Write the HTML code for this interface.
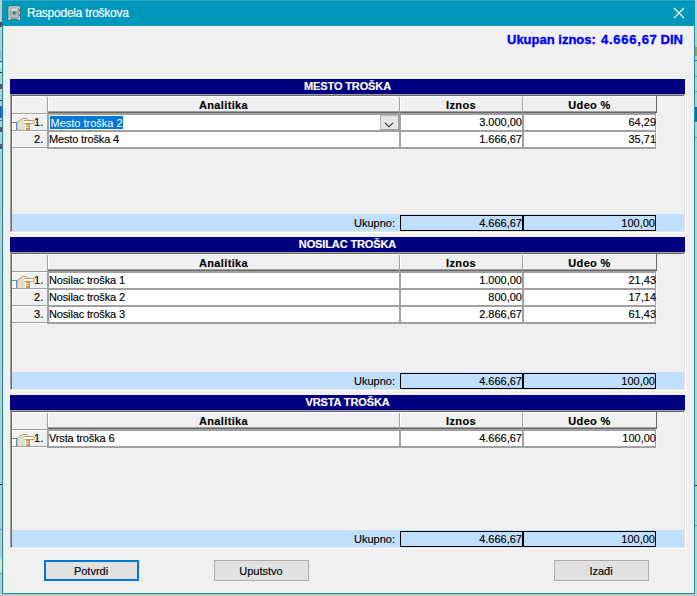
<!DOCTYPE html>
<html><head><meta charset="utf-8"><style>
html,body{margin:0;padding:0;}
body{width:697px;height:596px;position:relative;overflow:hidden;background:#C9C6C6;font-family:"Liberation Sans", sans-serif;}
.t{-webkit-text-stroke:0.15px currentColor;}
</style></head><body>
<div style="position:absolute;left:0px;top:22px;width:2px;height:5px;background:#6A4050"></div><div style="position:absolute;left:0px;top:50px;width:2px;height:9px;background:#B8B8B8"></div><div style="position:absolute;left:0px;top:61px;width:2px;height:1px;background:#505050"></div><div style="position:absolute;left:0px;top:63px;width:2px;height:5px;background:#CFE6E6"></div><div style="position:absolute;left:0px;top:72px;width:2px;height:1px;background:#303030"></div><div style="position:absolute;left:0px;top:84px;width:2px;height:5px;background:#7A4A5A"></div><div style="position:absolute;left:0px;top:100px;width:2px;height:1px;background:#404040"></div><div style="position:absolute;left:0px;top:106px;width:2px;height:12px;background:#2A64C0"></div><div style="position:absolute;left:0px;top:120px;width:2px;height:1px;background:#505050"></div><div style="position:absolute;left:0px;top:127px;width:2px;height:5px;background:#7A4A5A"></div><div style="position:absolute;left:0px;top:144px;width:2px;height:5px;background:#7A4A5A"></div><div style="position:absolute;left:0px;top:484px;width:2px;height:1px;background:#202020"></div><div style="position:absolute;left:0px;top:529px;width:2px;height:1px;background:#808080"></div><div style="position:absolute;left:0px;top:559px;width:2px;height:13px;background:#E6E0B8"></div><div style="position:absolute;left:0px;top:573px;width:2px;height:1px;background:#909090"></div><div style="position:absolute;left:695px;top:47px;width:2px;height:9px;background:#D08A3A"></div><div style="position:absolute;left:695px;top:60px;width:2px;height:1px;background:#707070"></div><div style="position:absolute;left:695px;top:76px;width:2px;height:1px;background:#909090"></div><div style="position:absolute;left:695px;top:91px;width:2px;height:1px;background:#909090"></div><div style="position:absolute;left:695px;top:107px;width:2px;height:14px;background:#0A64C4"></div><div style="position:absolute;left:695px;top:121px;width:2px;height:1px;background:#707070"></div><div style="position:absolute;left:695px;top:137px;width:2px;height:1px;background:#909090"></div><div style="position:absolute;left:695px;top:485px;width:2px;height:1px;background:#303030"></div><div style="position:absolute;left:695px;top:525px;width:2px;height:1px;background:#909090"></div><div style="position:absolute;left:2px;top:0px;width:693px;height:594px;background:#0099BC"></div><div style="position:absolute;left:2px;top:0px;width:693px;height:1px;background:#33A6C8"></div><div style="position:absolute;left:3px;top:26px;width:691px;height:567px;background:#F0F0F0;box-sizing:border-box;border:1px solid #FBF6F4"></div><svg style="position:absolute;left:7px;top:5px" width="15" height="16" viewBox="0 0 15 16"><path d="M1 15.5 L1 2.5 Q1 0.8 3 0.8 L11.5 0.8 Q13.5 0.8 13.5 2.5 L13.5 15.5 L11 15.5 L10.5 14 L4 14 L3.5 15.5 Z" fill="#D5CDD3" stroke="#1A5F64" stroke-width="0.8" stroke-opacity="0.8"/><rect x="3" y="3" width="9" height="9.5" fill="#A4B4B2" stroke="#6F8A88" stroke-width="0.6"/><rect x="3.5" y="3.5" width="7" height="2" fill="#E6DEE4"/><rect x="3.5" y="10.5" width="7.5" height="1.2" fill="#CFC6CC"/><circle cx="7.3" cy="8" r="1.5" fill="#2C7870"/><rect x="12" y="4.5" width="1" height="1.5" fill="#2C7870"/><rect x="12" y="9.5" width="1" height="1.5" fill="#2C7870"/></svg><div class="t" style="position:absolute;left:27px;top:4px;width:200px;height:18px;line-height:18px;white-space:nowrap;color:#fff;font-size:12px;letter-spacing:-0.24px;">Raspodela troškova</div><svg style="position:absolute;left:672px;top:6px" width="14" height="14"><path d="M2 2 L12 12 M12 2 L2 12" stroke="#fff" stroke-width="1.1"/></svg><div class="t" style="position:absolute;left:507px;top:32px;width:100px;height:16px;line-height:16px;white-space:nowrap;color:#0000FF;font-weight:bold;font-size:13px;-webkit-text-stroke:0.35px #0000FF;">Ukupan iznos:</div><div class="t" style="position:absolute;left:601px;top:32px;width:70px;height:16px;line-height:16px;white-space:nowrap;color:#0000FF;font-weight:bold;font-size:13px;-webkit-text-stroke:0.35px #0000FF;letter-spacing:0.75px;">4.666,67</div><div class="t" style="position:absolute;left:660.5px;top:32px;width:30px;height:16px;line-height:16px;white-space:nowrap;color:#0000FF;font-weight:bold;font-size:13px;-webkit-text-stroke:0.35px #0000FF;">DIN</div><div class="t" style="position:absolute;left:10px;top:79px;width:675px;height:15px;line-height:15px;white-space:nowrap;background:#000080;color:#fff;font-weight:bold;font-size:11px;text-align:center;letter-spacing:-0.12px;">MESTO TROŠKA</div><div style="position:absolute;left:10px;top:94px;width:675px;height:1px;background:#A0A0A0"></div><div style="position:absolute;left:10px;top:94px;width:1px;height:138px;background:#A0A0A0"></div><div style="position:absolute;left:11px;top:95px;width:673px;height:1px;background:#696969"></div><div style="position:absolute;left:11px;top:95px;width:1px;height:136px;background:#696969"></div><div style="position:absolute;left:684px;top:95px;width:1px;height:137px;background:#E3E3E3"></div><div style="position:absolute;left:11px;top:231px;width:674px;height:1px;background:#E3E3E3"></div><div style="position:absolute;left:685px;top:94px;width:1px;height:139px;background:#fff"></div><div style="position:absolute;left:10px;top:232px;width:676px;height:1px;background:#fff"></div><div style="position:absolute;left:12px;top:96px;width:644px;height:1px;background:#fff"></div><div style="position:absolute;left:12px;top:96px;width:1px;height:17px;background:#fff"></div><div style="position:absolute;left:48px;top:96px;width:1px;height:16px;background:#fff"></div><div style="position:absolute;left:48px;top:111px;width:351px;height:1px;background:#A0A0A0"></div><div style="position:absolute;left:48px;top:112px;width:352px;height:1px;background:#696969"></div><div class="t" style="position:absolute;left:48px;top:97px;width:351px;height:16px;line-height:16px;white-space:nowrap;font-weight:bold;font-size:11px;text-align:center;color:#000;letter-spacing:0.35px;">Analitika</div><div style="position:absolute;left:400px;top:96px;width:1px;height:16px;background:#fff"></div><div style="position:absolute;left:400px;top:111px;width:122px;height:1px;background:#A0A0A0"></div><div style="position:absolute;left:400px;top:112px;width:123px;height:1px;background:#696969"></div><div class="t" style="position:absolute;left:400px;top:97px;width:122px;height:16px;line-height:16px;white-space:nowrap;font-weight:bold;font-size:11px;text-align:center;color:#000;letter-spacing:0.35px;">Iznos</div><div style="position:absolute;left:523px;top:96px;width:1px;height:16px;background:#fff"></div><div style="position:absolute;left:523px;top:111px;width:133px;height:1px;background:#A0A0A0"></div><div style="position:absolute;left:523px;top:112px;width:134px;height:1px;background:#696969"></div><div class="t" style="position:absolute;left:523px;top:97px;width:133px;height:16px;line-height:16px;white-space:nowrap;font-weight:bold;font-size:11px;text-align:center;color:#000;letter-spacing:0.35px;">Udeo %</div><div style="position:absolute;left:656px;top:96px;width:1px;height:17px;background:#696969"></div><div style="position:absolute;left:47px;top:97px;width:1px;height:16px;background:#A0A0A0"></div><div style="position:absolute;left:399px;top:97px;width:1px;height:16px;background:#A0A0A0"></div><div style="position:absolute;left:522px;top:97px;width:1px;height:16px;background:#A0A0A0"></div><div style="position:absolute;left:47px;top:113px;width:609px;height:2px;background:#A0A0A0"></div><div style="position:absolute;left:12px;top:113px;width:35px;height:1px;background:#A0A0A0"></div><div style="position:absolute;left:12px;top:114px;width:35px;height:1px;background:#fff"></div><div style="position:absolute;left:12px;top:115px;width:1px;height:15px;background:#fff"></div><div style="position:absolute;left:49px;top:115px;width:350px;height:15px;background:#fff"></div><div style="position:absolute;left:401px;top:115px;width:121px;height:15px;background:#fff"></div><div style="position:absolute;left:524px;top:115px;width:131px;height:15px;background:#fff"></div><div style="position:absolute;left:47px;top:130px;width:609px;height:2px;background:#A0A0A0"></div><div style="position:absolute;left:12px;top:130px;width:35px;height:1px;background:#A0A0A0"></div><div style="position:absolute;left:12px;top:131px;width:35px;height:1px;background:#fff"></div><div style="position:absolute;left:47px;top:113px;width:2px;height:19px;background:#A0A0A0"></div><div style="position:absolute;left:399px;top:113px;width:2px;height:19px;background:#A0A0A0"></div><div style="position:absolute;left:522px;top:113px;width:2px;height:19px;background:#A0A0A0"></div><div style="position:absolute;left:655px;top:113px;width:1px;height:19px;background:#A0A0A0"></div><div style="position:absolute;left:656px;top:114px;width:1px;height:17px;background:#F7F7F7"></div><div class="t" style="position:absolute;left:12px;top:114px;width:31.3px;height:16px;line-height:16px;white-space:nowrap;font-size:11px;text-align:right;color:#000;">1.</div><div style="position:absolute;left:50px;top:116px;height:13px;line-height:15px;background:#0078D7;color:#fff;font-size:11px;padding:0 0.5px;white-space:nowrap">Mesto troška 2</div><div style="position:absolute;left:380px;top:115px;width:18px;height:15px;background:#E5E5E5;box-sizing:border-box;border:1px solid #B9B9B9;border-right:none"></div><div style="position:absolute;left:398px;top:115px;width:1px;height:15px;background:#A0A0A0"></div><div style="position:absolute;left:380px;top:129px;width:19px;height:1px;background:#A0A0A0"></div><svg style="position:absolute;left:380px;top:114px" width="18" height="16"><path d="M5 8.8 L9 12.8 L13 8.8" fill="none" stroke="#333" stroke-width="1.1"/></svg><div class="t" style="position:absolute;left:400px;top:114px;width:122px;height:16px;line-height:16px;white-space:nowrap;font-size:11px;text-align:right;color:#000;">3.000,00</div><div class="t" style="position:absolute;left:523px;top:114px;width:133px;height:16px;line-height:16px;white-space:nowrap;font-size:11px;text-align:right;color:#000;">64,29</div><svg style="position:absolute;left:12px;top:118px" width="23" height="12" shape-rendering="crispEdges"><rect x="10" y="0" width="5" height="1" fill="#C8965C"/><rect x="8" y="1" width="2" height="1" fill="#C8965C"/><rect x="10" y="1" width="5" height="1" fill="#FFFFFF"/><rect x="15" y="1" width="1" height="1" fill="#C8965C"/><rect x="7" y="2" width="1" height="1" fill="#C8965C"/><rect x="8" y="2" width="4" height="1" fill="#E2E0C4"/><rect x="12" y="2" width="10" height="1" fill="#C8965C"/><rect x="6" y="3" width="1" height="1" fill="#C8965C"/><rect x="7" y="3" width="5" height="1" fill="#E2E0C4"/><rect x="12" y="3" width="10" height="1" fill="#FFFFFF"/><rect x="22" y="3" width="1" height="1" fill="#C8965C"/><rect x="0" y="4" width="5" height="1" fill="#5E8CD0"/><rect x="5" y="4" width="1" height="1" fill="#C8965C"/><rect x="6" y="4" width="7" height="1" fill="#E2E0C4"/><rect x="13" y="4" width="9" height="1" fill="#FFFFFF"/><rect x="22" y="4" width="1" height="1" fill="#C8965C"/><rect x="0" y="5" width="4" height="1" fill="#FFFBEA"/><rect x="4" y="5" width="1" height="1" fill="#5E8CD0"/><rect x="5" y="5" width="1" height="1" fill="#E6BE7E"/><rect x="6" y="5" width="7" height="1" fill="#E2E0C4"/><rect x="13" y="5" width="9" height="1" fill="#C8965C"/><rect x="0" y="6" width="4" height="1" fill="#FFFBEA"/><rect x="4" y="6" width="1" height="1" fill="#5E8CD0"/><rect x="5" y="6" width="1" height="1" fill="#E6BE7E"/><rect x="6" y="6" width="7" height="1" fill="#E2E0C4"/><rect x="13" y="6" width="1" height="1" fill="#FFFFFF"/><rect x="14" y="6" width="4" height="1" fill="#C8965C"/><rect x="0" y="7" width="4" height="1" fill="#FFFBEA"/><rect x="4" y="7" width="1" height="1" fill="#5E8CD0"/><rect x="5" y="7" width="1" height="1" fill="#E6BE7E"/><rect x="6" y="7" width="7" height="1" fill="#E2E0C4"/><rect x="13" y="7" width="1" height="1" fill="#FFFFFF"/><rect x="14" y="7" width="3" height="1" fill="#E2E0C4"/><rect x="17" y="7" width="1" height="1" fill="#C8965C"/><rect x="0" y="8" width="4" height="1" fill="#FFFBEA"/><rect x="4" y="8" width="1" height="1" fill="#5E8CD0"/><rect x="5" y="8" width="1" height="1" fill="#E6BE7E"/><rect x="6" y="8" width="7" height="1" fill="#E2E0C4"/><rect x="13" y="8" width="1" height="1" fill="#FFFFFF"/><rect x="14" y="8" width="4" height="1" fill="#C8965C"/><rect x="0" y="9" width="4" height="1" fill="#FFFBEA"/><rect x="4" y="9" width="1" height="1" fill="#5E8CD0"/><rect x="5" y="9" width="1" height="1" fill="#E6BE7E"/><rect x="6" y="9" width="7" height="1" fill="#E2E0C4"/><rect x="13" y="9" width="1" height="1" fill="#FFFFFF"/><rect x="14" y="9" width="3" height="1" fill="#E2E0C4"/><rect x="17" y="9" width="1" height="1" fill="#C8965C"/><rect x="0" y="10" width="4" height="1" fill="#FFFBEA"/><rect x="4" y="10" width="1" height="1" fill="#5E8CD0"/><rect x="5" y="10" width="1" height="1" fill="#E6BE7E"/><rect x="6" y="10" width="7" height="1" fill="#E2E0C4"/><rect x="13" y="10" width="1" height="1" fill="#FFFFFF"/><rect x="14" y="10" width="4" height="1" fill="#C8965C"/><rect x="0" y="11" width="4" height="1" fill="#FFFBEA"/><rect x="4" y="11" width="1" height="1" fill="#5E8CD0"/><rect x="5" y="11" width="1" height="1" fill="#E6BE7E"/><rect x="6" y="11" width="7" height="1" fill="#E2E0C4"/><rect x="13" y="11" width="1" height="1" fill="#FFFFFF"/><rect x="14" y="11" width="4" height="1" fill="#C8965C"/></svg><div style="position:absolute;left:12px;top:132px;width:1px;height:15px;background:#fff"></div><div style="position:absolute;left:49px;top:132px;width:350px;height:15px;background:#fff"></div><div style="position:absolute;left:401px;top:132px;width:121px;height:15px;background:#fff"></div><div style="position:absolute;left:524px;top:132px;width:131px;height:15px;background:#fff"></div><div style="position:absolute;left:47px;top:147px;width:609px;height:2px;background:#A0A0A0"></div><div style="position:absolute;left:12px;top:147px;width:35px;height:1px;background:#A0A0A0"></div><div style="position:absolute;left:12px;top:148px;width:35px;height:1px;background:#fff"></div><div style="position:absolute;left:47px;top:130px;width:2px;height:19px;background:#A0A0A0"></div><div style="position:absolute;left:399px;top:130px;width:2px;height:19px;background:#A0A0A0"></div><div style="position:absolute;left:522px;top:130px;width:2px;height:19px;background:#A0A0A0"></div><div style="position:absolute;left:655px;top:130px;width:1px;height:19px;background:#A0A0A0"></div><div style="position:absolute;left:656px;top:131px;width:1px;height:17px;background:#F7F7F7"></div><div class="t" style="position:absolute;left:12px;top:131px;width:31.3px;height:16px;line-height:16px;white-space:nowrap;font-size:11px;text-align:right;color:#000;">2.</div><div class="t" style="position:absolute;left:49px;top:131px;width:340px;height:16px;line-height:16px;white-space:nowrap;font-size:11px;color:#000;letter-spacing:-0.15px;">Mesto troška 4</div><div class="t" style="position:absolute;left:400px;top:131px;width:122px;height:16px;line-height:16px;white-space:nowrap;font-size:11px;text-align:right;color:#000;">1.666,67</div><div class="t" style="position:absolute;left:523px;top:131px;width:133px;height:16px;line-height:16px;white-space:nowrap;font-size:11px;text-align:right;color:#000;">35,71</div><div style="position:absolute;left:12px;top:214px;width:672px;height:17px;background:#C0DFFD"></div><div class="t" style="position:absolute;left:300px;top:215px;width:95px;height:17px;line-height:17px;white-space:nowrap;font-size:11px;text-align:right;color:#000;">Ukupno:</div><div style="position:absolute;left:400px;top:215px;width:123px;height:16px;box-sizing:border-box;border:1px solid #000;background:#C0DFFD"></div><div class="t" style="position:absolute;left:400px;top:215px;width:122px;height:16px;line-height:16px;white-space:nowrap;font-size:11px;text-align:right;color:#000;">4.666,67</div><div style="position:absolute;left:523px;top:215px;width:133px;height:16px;box-sizing:border-box;border:1px solid #000;background:#C0DFFD"></div><div class="t" style="position:absolute;left:523px;top:215px;width:132px;height:16px;line-height:16px;white-space:nowrap;font-size:11px;text-align:right;color:#000;">100,00</div><div class="t" style="position:absolute;left:10px;top:237px;width:675px;height:15px;line-height:15px;white-space:nowrap;background:#000080;color:#fff;font-weight:bold;font-size:11px;text-align:center;letter-spacing:-0.12px;">NOSILAC TROŠKA</div><div style="position:absolute;left:10px;top:252px;width:675px;height:1px;background:#A0A0A0"></div><div style="position:absolute;left:10px;top:252px;width:1px;height:138px;background:#A0A0A0"></div><div style="position:absolute;left:11px;top:253px;width:673px;height:1px;background:#696969"></div><div style="position:absolute;left:11px;top:253px;width:1px;height:136px;background:#696969"></div><div style="position:absolute;left:684px;top:253px;width:1px;height:137px;background:#E3E3E3"></div><div style="position:absolute;left:11px;top:389px;width:674px;height:1px;background:#E3E3E3"></div><div style="position:absolute;left:685px;top:252px;width:1px;height:139px;background:#fff"></div><div style="position:absolute;left:10px;top:390px;width:676px;height:1px;background:#fff"></div><div style="position:absolute;left:12px;top:254px;width:644px;height:1px;background:#fff"></div><div style="position:absolute;left:12px;top:254px;width:1px;height:17px;background:#fff"></div><div style="position:absolute;left:48px;top:254px;width:1px;height:16px;background:#fff"></div><div style="position:absolute;left:48px;top:269px;width:351px;height:1px;background:#A0A0A0"></div><div style="position:absolute;left:48px;top:270px;width:352px;height:1px;background:#696969"></div><div class="t" style="position:absolute;left:48px;top:255px;width:351px;height:16px;line-height:16px;white-space:nowrap;font-weight:bold;font-size:11px;text-align:center;color:#000;letter-spacing:0.35px;">Analitika</div><div style="position:absolute;left:400px;top:254px;width:1px;height:16px;background:#fff"></div><div style="position:absolute;left:400px;top:269px;width:122px;height:1px;background:#A0A0A0"></div><div style="position:absolute;left:400px;top:270px;width:123px;height:1px;background:#696969"></div><div class="t" style="position:absolute;left:400px;top:255px;width:122px;height:16px;line-height:16px;white-space:nowrap;font-weight:bold;font-size:11px;text-align:center;color:#000;letter-spacing:0.35px;">Iznos</div><div style="position:absolute;left:523px;top:254px;width:1px;height:16px;background:#fff"></div><div style="position:absolute;left:523px;top:269px;width:133px;height:1px;background:#A0A0A0"></div><div style="position:absolute;left:523px;top:270px;width:134px;height:1px;background:#696969"></div><div class="t" style="position:absolute;left:523px;top:255px;width:133px;height:16px;line-height:16px;white-space:nowrap;font-weight:bold;font-size:11px;text-align:center;color:#000;letter-spacing:0.35px;">Udeo %</div><div style="position:absolute;left:656px;top:254px;width:1px;height:17px;background:#696969"></div><div style="position:absolute;left:47px;top:255px;width:1px;height:16px;background:#A0A0A0"></div><div style="position:absolute;left:399px;top:255px;width:1px;height:16px;background:#A0A0A0"></div><div style="position:absolute;left:522px;top:255px;width:1px;height:16px;background:#A0A0A0"></div><div style="position:absolute;left:47px;top:271px;width:609px;height:2px;background:#A0A0A0"></div><div style="position:absolute;left:12px;top:271px;width:35px;height:1px;background:#A0A0A0"></div><div style="position:absolute;left:12px;top:272px;width:35px;height:1px;background:#fff"></div><div style="position:absolute;left:12px;top:273px;width:1px;height:15px;background:#fff"></div><div style="position:absolute;left:49px;top:273px;width:350px;height:15px;background:#fff"></div><div style="position:absolute;left:401px;top:273px;width:121px;height:15px;background:#fff"></div><div style="position:absolute;left:524px;top:273px;width:131px;height:15px;background:#fff"></div><div style="position:absolute;left:47px;top:288px;width:609px;height:2px;background:#A0A0A0"></div><div style="position:absolute;left:12px;top:288px;width:35px;height:1px;background:#A0A0A0"></div><div style="position:absolute;left:12px;top:289px;width:35px;height:1px;background:#fff"></div><div style="position:absolute;left:47px;top:271px;width:2px;height:19px;background:#A0A0A0"></div><div style="position:absolute;left:399px;top:271px;width:2px;height:19px;background:#A0A0A0"></div><div style="position:absolute;left:522px;top:271px;width:2px;height:19px;background:#A0A0A0"></div><div style="position:absolute;left:655px;top:271px;width:1px;height:19px;background:#A0A0A0"></div><div style="position:absolute;left:656px;top:272px;width:1px;height:17px;background:#F7F7F7"></div><div class="t" style="position:absolute;left:12px;top:272px;width:31.3px;height:16px;line-height:16px;white-space:nowrap;font-size:11px;text-align:right;color:#000;">1.</div><div class="t" style="position:absolute;left:49px;top:272px;width:340px;height:16px;line-height:16px;white-space:nowrap;font-size:11px;color:#000;letter-spacing:-0.15px;">Nosilac troška 1</div><div class="t" style="position:absolute;left:400px;top:272px;width:122px;height:16px;line-height:16px;white-space:nowrap;font-size:11px;text-align:right;color:#000;">1.000,00</div><div class="t" style="position:absolute;left:523px;top:272px;width:133px;height:16px;line-height:16px;white-space:nowrap;font-size:11px;text-align:right;color:#000;">21,43</div><svg style="position:absolute;left:12px;top:276px" width="23" height="12" shape-rendering="crispEdges"><rect x="10" y="0" width="5" height="1" fill="#C8965C"/><rect x="8" y="1" width="2" height="1" fill="#C8965C"/><rect x="10" y="1" width="5" height="1" fill="#FFFFFF"/><rect x="15" y="1" width="1" height="1" fill="#C8965C"/><rect x="7" y="2" width="1" height="1" fill="#C8965C"/><rect x="8" y="2" width="4" height="1" fill="#E2E0C4"/><rect x="12" y="2" width="10" height="1" fill="#C8965C"/><rect x="6" y="3" width="1" height="1" fill="#C8965C"/><rect x="7" y="3" width="5" height="1" fill="#E2E0C4"/><rect x="12" y="3" width="10" height="1" fill="#FFFFFF"/><rect x="22" y="3" width="1" height="1" fill="#C8965C"/><rect x="0" y="4" width="5" height="1" fill="#5E8CD0"/><rect x="5" y="4" width="1" height="1" fill="#C8965C"/><rect x="6" y="4" width="7" height="1" fill="#E2E0C4"/><rect x="13" y="4" width="9" height="1" fill="#FFFFFF"/><rect x="22" y="4" width="1" height="1" fill="#C8965C"/><rect x="0" y="5" width="4" height="1" fill="#FFFBEA"/><rect x="4" y="5" width="1" height="1" fill="#5E8CD0"/><rect x="5" y="5" width="1" height="1" fill="#E6BE7E"/><rect x="6" y="5" width="7" height="1" fill="#E2E0C4"/><rect x="13" y="5" width="9" height="1" fill="#C8965C"/><rect x="0" y="6" width="4" height="1" fill="#FFFBEA"/><rect x="4" y="6" width="1" height="1" fill="#5E8CD0"/><rect x="5" y="6" width="1" height="1" fill="#E6BE7E"/><rect x="6" y="6" width="7" height="1" fill="#E2E0C4"/><rect x="13" y="6" width="1" height="1" fill="#FFFFFF"/><rect x="14" y="6" width="4" height="1" fill="#C8965C"/><rect x="0" y="7" width="4" height="1" fill="#FFFBEA"/><rect x="4" y="7" width="1" height="1" fill="#5E8CD0"/><rect x="5" y="7" width="1" height="1" fill="#E6BE7E"/><rect x="6" y="7" width="7" height="1" fill="#E2E0C4"/><rect x="13" y="7" width="1" height="1" fill="#FFFFFF"/><rect x="14" y="7" width="3" height="1" fill="#E2E0C4"/><rect x="17" y="7" width="1" height="1" fill="#C8965C"/><rect x="0" y="8" width="4" height="1" fill="#FFFBEA"/><rect x="4" y="8" width="1" height="1" fill="#5E8CD0"/><rect x="5" y="8" width="1" height="1" fill="#E6BE7E"/><rect x="6" y="8" width="7" height="1" fill="#E2E0C4"/><rect x="13" y="8" width="1" height="1" fill="#FFFFFF"/><rect x="14" y="8" width="4" height="1" fill="#C8965C"/><rect x="0" y="9" width="4" height="1" fill="#FFFBEA"/><rect x="4" y="9" width="1" height="1" fill="#5E8CD0"/><rect x="5" y="9" width="1" height="1" fill="#E6BE7E"/><rect x="6" y="9" width="7" height="1" fill="#E2E0C4"/><rect x="13" y="9" width="1" height="1" fill="#FFFFFF"/><rect x="14" y="9" width="3" height="1" fill="#E2E0C4"/><rect x="17" y="9" width="1" height="1" fill="#C8965C"/><rect x="0" y="10" width="4" height="1" fill="#FFFBEA"/><rect x="4" y="10" width="1" height="1" fill="#5E8CD0"/><rect x="5" y="10" width="1" height="1" fill="#E6BE7E"/><rect x="6" y="10" width="7" height="1" fill="#E2E0C4"/><rect x="13" y="10" width="1" height="1" fill="#FFFFFF"/><rect x="14" y="10" width="4" height="1" fill="#C8965C"/><rect x="0" y="11" width="4" height="1" fill="#FFFBEA"/><rect x="4" y="11" width="1" height="1" fill="#5E8CD0"/><rect x="5" y="11" width="1" height="1" fill="#E6BE7E"/><rect x="6" y="11" width="7" height="1" fill="#E2E0C4"/><rect x="13" y="11" width="1" height="1" fill="#FFFFFF"/><rect x="14" y="11" width="4" height="1" fill="#C8965C"/></svg><div style="position:absolute;left:12px;top:290px;width:1px;height:15px;background:#fff"></div><div style="position:absolute;left:49px;top:290px;width:350px;height:15px;background:#fff"></div><div style="position:absolute;left:401px;top:290px;width:121px;height:15px;background:#fff"></div><div style="position:absolute;left:524px;top:290px;width:131px;height:15px;background:#fff"></div><div style="position:absolute;left:47px;top:305px;width:609px;height:2px;background:#A0A0A0"></div><div style="position:absolute;left:12px;top:305px;width:35px;height:1px;background:#A0A0A0"></div><div style="position:absolute;left:12px;top:306px;width:35px;height:1px;background:#fff"></div><div style="position:absolute;left:47px;top:288px;width:2px;height:19px;background:#A0A0A0"></div><div style="position:absolute;left:399px;top:288px;width:2px;height:19px;background:#A0A0A0"></div><div style="position:absolute;left:522px;top:288px;width:2px;height:19px;background:#A0A0A0"></div><div style="position:absolute;left:655px;top:288px;width:1px;height:19px;background:#A0A0A0"></div><div style="position:absolute;left:656px;top:289px;width:1px;height:17px;background:#F7F7F7"></div><div class="t" style="position:absolute;left:12px;top:289px;width:31.3px;height:16px;line-height:16px;white-space:nowrap;font-size:11px;text-align:right;color:#000;">2.</div><div class="t" style="position:absolute;left:49px;top:289px;width:340px;height:16px;line-height:16px;white-space:nowrap;font-size:11px;color:#000;letter-spacing:-0.15px;">Nosilac troška 2</div><div class="t" style="position:absolute;left:400px;top:289px;width:122px;height:16px;line-height:16px;white-space:nowrap;font-size:11px;text-align:right;color:#000;">800,00</div><div class="t" style="position:absolute;left:523px;top:289px;width:133px;height:16px;line-height:16px;white-space:nowrap;font-size:11px;text-align:right;color:#000;">17,14</div><div style="position:absolute;left:12px;top:307px;width:1px;height:15px;background:#fff"></div><div style="position:absolute;left:49px;top:307px;width:350px;height:15px;background:#fff"></div><div style="position:absolute;left:401px;top:307px;width:121px;height:15px;background:#fff"></div><div style="position:absolute;left:524px;top:307px;width:131px;height:15px;background:#fff"></div><div style="position:absolute;left:47px;top:322px;width:609px;height:2px;background:#A0A0A0"></div><div style="position:absolute;left:12px;top:322px;width:35px;height:1px;background:#A0A0A0"></div><div style="position:absolute;left:12px;top:323px;width:35px;height:1px;background:#fff"></div><div style="position:absolute;left:47px;top:305px;width:2px;height:19px;background:#A0A0A0"></div><div style="position:absolute;left:399px;top:305px;width:2px;height:19px;background:#A0A0A0"></div><div style="position:absolute;left:522px;top:305px;width:2px;height:19px;background:#A0A0A0"></div><div style="position:absolute;left:655px;top:305px;width:1px;height:19px;background:#A0A0A0"></div><div style="position:absolute;left:656px;top:306px;width:1px;height:17px;background:#F7F7F7"></div><div class="t" style="position:absolute;left:12px;top:306px;width:31.3px;height:16px;line-height:16px;white-space:nowrap;font-size:11px;text-align:right;color:#000;">3.</div><div class="t" style="position:absolute;left:49px;top:306px;width:340px;height:16px;line-height:16px;white-space:nowrap;font-size:11px;color:#000;letter-spacing:-0.15px;">Nosilac troška 3</div><div class="t" style="position:absolute;left:400px;top:306px;width:122px;height:16px;line-height:16px;white-space:nowrap;font-size:11px;text-align:right;color:#000;">2.866,67</div><div class="t" style="position:absolute;left:523px;top:306px;width:133px;height:16px;line-height:16px;white-space:nowrap;font-size:11px;text-align:right;color:#000;">61,43</div><div style="position:absolute;left:12px;top:372px;width:672px;height:17px;background:#C0DFFD"></div><div class="t" style="position:absolute;left:300px;top:373px;width:95px;height:17px;line-height:17px;white-space:nowrap;font-size:11px;text-align:right;color:#000;">Ukupno:</div><div style="position:absolute;left:400px;top:373px;width:123px;height:16px;box-sizing:border-box;border:1px solid #000;background:#C0DFFD"></div><div class="t" style="position:absolute;left:400px;top:373px;width:122px;height:16px;line-height:16px;white-space:nowrap;font-size:11px;text-align:right;color:#000;">4.666,67</div><div style="position:absolute;left:523px;top:373px;width:133px;height:16px;box-sizing:border-box;border:1px solid #000;background:#C0DFFD"></div><div class="t" style="position:absolute;left:523px;top:373px;width:132px;height:16px;line-height:16px;white-space:nowrap;font-size:11px;text-align:right;color:#000;">100,00</div><div class="t" style="position:absolute;left:10px;top:395px;width:675px;height:15px;line-height:15px;white-space:nowrap;background:#000080;color:#fff;font-weight:bold;font-size:11px;text-align:center;letter-spacing:-0.12px;">VRSTA TROŠKA</div><div style="position:absolute;left:10px;top:410px;width:675px;height:1px;background:#A0A0A0"></div><div style="position:absolute;left:10px;top:410px;width:1px;height:138px;background:#A0A0A0"></div><div style="position:absolute;left:11px;top:411px;width:673px;height:1px;background:#696969"></div><div style="position:absolute;left:11px;top:411px;width:1px;height:136px;background:#696969"></div><div style="position:absolute;left:684px;top:411px;width:1px;height:137px;background:#E3E3E3"></div><div style="position:absolute;left:11px;top:547px;width:674px;height:1px;background:#E3E3E3"></div><div style="position:absolute;left:685px;top:410px;width:1px;height:139px;background:#fff"></div><div style="position:absolute;left:10px;top:548px;width:676px;height:1px;background:#fff"></div><div style="position:absolute;left:12px;top:412px;width:644px;height:1px;background:#fff"></div><div style="position:absolute;left:12px;top:412px;width:1px;height:17px;background:#fff"></div><div style="position:absolute;left:48px;top:412px;width:1px;height:16px;background:#fff"></div><div style="position:absolute;left:48px;top:427px;width:351px;height:1px;background:#A0A0A0"></div><div style="position:absolute;left:48px;top:428px;width:352px;height:1px;background:#696969"></div><div class="t" style="position:absolute;left:48px;top:413px;width:351px;height:16px;line-height:16px;white-space:nowrap;font-weight:bold;font-size:11px;text-align:center;color:#000;letter-spacing:0.35px;">Analitika</div><div style="position:absolute;left:400px;top:412px;width:1px;height:16px;background:#fff"></div><div style="position:absolute;left:400px;top:427px;width:122px;height:1px;background:#A0A0A0"></div><div style="position:absolute;left:400px;top:428px;width:123px;height:1px;background:#696969"></div><div class="t" style="position:absolute;left:400px;top:413px;width:122px;height:16px;line-height:16px;white-space:nowrap;font-weight:bold;font-size:11px;text-align:center;color:#000;letter-spacing:0.35px;">Iznos</div><div style="position:absolute;left:523px;top:412px;width:1px;height:16px;background:#fff"></div><div style="position:absolute;left:523px;top:427px;width:133px;height:1px;background:#A0A0A0"></div><div style="position:absolute;left:523px;top:428px;width:134px;height:1px;background:#696969"></div><div class="t" style="position:absolute;left:523px;top:413px;width:133px;height:16px;line-height:16px;white-space:nowrap;font-weight:bold;font-size:11px;text-align:center;color:#000;letter-spacing:0.35px;">Udeo %</div><div style="position:absolute;left:656px;top:412px;width:1px;height:17px;background:#696969"></div><div style="position:absolute;left:47px;top:413px;width:1px;height:16px;background:#A0A0A0"></div><div style="position:absolute;left:399px;top:413px;width:1px;height:16px;background:#A0A0A0"></div><div style="position:absolute;left:522px;top:413px;width:1px;height:16px;background:#A0A0A0"></div><div style="position:absolute;left:47px;top:429px;width:609px;height:2px;background:#A0A0A0"></div><div style="position:absolute;left:12px;top:429px;width:35px;height:1px;background:#A0A0A0"></div><div style="position:absolute;left:12px;top:430px;width:35px;height:1px;background:#fff"></div><div style="position:absolute;left:12px;top:431px;width:1px;height:15px;background:#fff"></div><div style="position:absolute;left:49px;top:431px;width:350px;height:15px;background:#fff"></div><div style="position:absolute;left:401px;top:431px;width:121px;height:15px;background:#fff"></div><div style="position:absolute;left:524px;top:431px;width:131px;height:15px;background:#fff"></div><div style="position:absolute;left:47px;top:446px;width:609px;height:2px;background:#A0A0A0"></div><div style="position:absolute;left:12px;top:446px;width:35px;height:1px;background:#A0A0A0"></div><div style="position:absolute;left:12px;top:447px;width:35px;height:1px;background:#fff"></div><div style="position:absolute;left:47px;top:429px;width:2px;height:19px;background:#A0A0A0"></div><div style="position:absolute;left:399px;top:429px;width:2px;height:19px;background:#A0A0A0"></div><div style="position:absolute;left:522px;top:429px;width:2px;height:19px;background:#A0A0A0"></div><div style="position:absolute;left:655px;top:429px;width:1px;height:19px;background:#A0A0A0"></div><div style="position:absolute;left:656px;top:430px;width:1px;height:17px;background:#F7F7F7"></div><div class="t" style="position:absolute;left:12px;top:430px;width:31.3px;height:16px;line-height:16px;white-space:nowrap;font-size:11px;text-align:right;color:#000;">1.</div><div class="t" style="position:absolute;left:49px;top:430px;width:340px;height:16px;line-height:16px;white-space:nowrap;font-size:11px;color:#000;letter-spacing:-0.15px;">Vrsta troška 6</div><div class="t" style="position:absolute;left:400px;top:430px;width:122px;height:16px;line-height:16px;white-space:nowrap;font-size:11px;text-align:right;color:#000;">4.666,67</div><div class="t" style="position:absolute;left:523px;top:430px;width:133px;height:16px;line-height:16px;white-space:nowrap;font-size:11px;text-align:right;color:#000;">100,00</div><svg style="position:absolute;left:12px;top:434px" width="23" height="12" shape-rendering="crispEdges"><rect x="10" y="0" width="5" height="1" fill="#C8965C"/><rect x="8" y="1" width="2" height="1" fill="#C8965C"/><rect x="10" y="1" width="5" height="1" fill="#FFFFFF"/><rect x="15" y="1" width="1" height="1" fill="#C8965C"/><rect x="7" y="2" width="1" height="1" fill="#C8965C"/><rect x="8" y="2" width="4" height="1" fill="#E2E0C4"/><rect x="12" y="2" width="10" height="1" fill="#C8965C"/><rect x="6" y="3" width="1" height="1" fill="#C8965C"/><rect x="7" y="3" width="5" height="1" fill="#E2E0C4"/><rect x="12" y="3" width="10" height="1" fill="#FFFFFF"/><rect x="22" y="3" width="1" height="1" fill="#C8965C"/><rect x="0" y="4" width="5" height="1" fill="#5E8CD0"/><rect x="5" y="4" width="1" height="1" fill="#C8965C"/><rect x="6" y="4" width="7" height="1" fill="#E2E0C4"/><rect x="13" y="4" width="9" height="1" fill="#FFFFFF"/><rect x="22" y="4" width="1" height="1" fill="#C8965C"/><rect x="0" y="5" width="4" height="1" fill="#FFFBEA"/><rect x="4" y="5" width="1" height="1" fill="#5E8CD0"/><rect x="5" y="5" width="1" height="1" fill="#E6BE7E"/><rect x="6" y="5" width="7" height="1" fill="#E2E0C4"/><rect x="13" y="5" width="9" height="1" fill="#C8965C"/><rect x="0" y="6" width="4" height="1" fill="#FFFBEA"/><rect x="4" y="6" width="1" height="1" fill="#5E8CD0"/><rect x="5" y="6" width="1" height="1" fill="#E6BE7E"/><rect x="6" y="6" width="7" height="1" fill="#E2E0C4"/><rect x="13" y="6" width="1" height="1" fill="#FFFFFF"/><rect x="14" y="6" width="4" height="1" fill="#C8965C"/><rect x="0" y="7" width="4" height="1" fill="#FFFBEA"/><rect x="4" y="7" width="1" height="1" fill="#5E8CD0"/><rect x="5" y="7" width="1" height="1" fill="#E6BE7E"/><rect x="6" y="7" width="7" height="1" fill="#E2E0C4"/><rect x="13" y="7" width="1" height="1" fill="#FFFFFF"/><rect x="14" y="7" width="3" height="1" fill="#E2E0C4"/><rect x="17" y="7" width="1" height="1" fill="#C8965C"/><rect x="0" y="8" width="4" height="1" fill="#FFFBEA"/><rect x="4" y="8" width="1" height="1" fill="#5E8CD0"/><rect x="5" y="8" width="1" height="1" fill="#E6BE7E"/><rect x="6" y="8" width="7" height="1" fill="#E2E0C4"/><rect x="13" y="8" width="1" height="1" fill="#FFFFFF"/><rect x="14" y="8" width="4" height="1" fill="#C8965C"/><rect x="0" y="9" width="4" height="1" fill="#FFFBEA"/><rect x="4" y="9" width="1" height="1" fill="#5E8CD0"/><rect x="5" y="9" width="1" height="1" fill="#E6BE7E"/><rect x="6" y="9" width="7" height="1" fill="#E2E0C4"/><rect x="13" y="9" width="1" height="1" fill="#FFFFFF"/><rect x="14" y="9" width="3" height="1" fill="#E2E0C4"/><rect x="17" y="9" width="1" height="1" fill="#C8965C"/><rect x="0" y="10" width="4" height="1" fill="#FFFBEA"/><rect x="4" y="10" width="1" height="1" fill="#5E8CD0"/><rect x="5" y="10" width="1" height="1" fill="#E6BE7E"/><rect x="6" y="10" width="7" height="1" fill="#E2E0C4"/><rect x="13" y="10" width="1" height="1" fill="#FFFFFF"/><rect x="14" y="10" width="4" height="1" fill="#C8965C"/><rect x="0" y="11" width="4" height="1" fill="#FFFBEA"/><rect x="4" y="11" width="1" height="1" fill="#5E8CD0"/><rect x="5" y="11" width="1" height="1" fill="#E6BE7E"/><rect x="6" y="11" width="7" height="1" fill="#E2E0C4"/><rect x="13" y="11" width="1" height="1" fill="#FFFFFF"/><rect x="14" y="11" width="4" height="1" fill="#C8965C"/></svg><div style="position:absolute;left:12px;top:530px;width:672px;height:17px;background:#C0DFFD"></div><div class="t" style="position:absolute;left:300px;top:531px;width:95px;height:17px;line-height:17px;white-space:nowrap;font-size:11px;text-align:right;color:#000;">Ukupno:</div><div style="position:absolute;left:400px;top:531px;width:123px;height:16px;box-sizing:border-box;border:1px solid #000;background:#C0DFFD"></div><div class="t" style="position:absolute;left:400px;top:531px;width:122px;height:16px;line-height:16px;white-space:nowrap;font-size:11px;text-align:right;color:#000;">4.666,67</div><div style="position:absolute;left:523px;top:531px;width:133px;height:16px;box-sizing:border-box;border:1px solid #000;background:#C0DFFD"></div><div class="t" style="position:absolute;left:523px;top:531px;width:132px;height:16px;line-height:16px;white-space:nowrap;font-size:11px;text-align:right;color:#000;">100,00</div><div class="t" style="position:absolute;left:44px;top:560px;width:95px;height:21px;line-height:21px;white-space:nowrap;box-sizing:border-box;border:2px solid #0078D7;background:#E1E1E1;font-size:11px;text-align:center;line-height:19px;color:#000;padding-right:1px;">Potvrdi</div><div class="t" style="position:absolute;left:214px;top:560px;width:95px;height:21px;line-height:21px;white-space:nowrap;box-sizing:border-box;border:1px solid #ADADAD;background:#E1E1E1;font-size:11px;text-align:center;line-height:21px;color:#000;padding-right:1px;">Uputstvo</div><div class="t" style="position:absolute;left:554px;top:560px;width:95px;height:21px;line-height:21px;white-space:nowrap;box-sizing:border-box;border:1px solid #ADADAD;background:#E1E1E1;font-size:11px;text-align:center;line-height:21px;color:#000;padding-right:1px;">Izađi</div></body></html>
